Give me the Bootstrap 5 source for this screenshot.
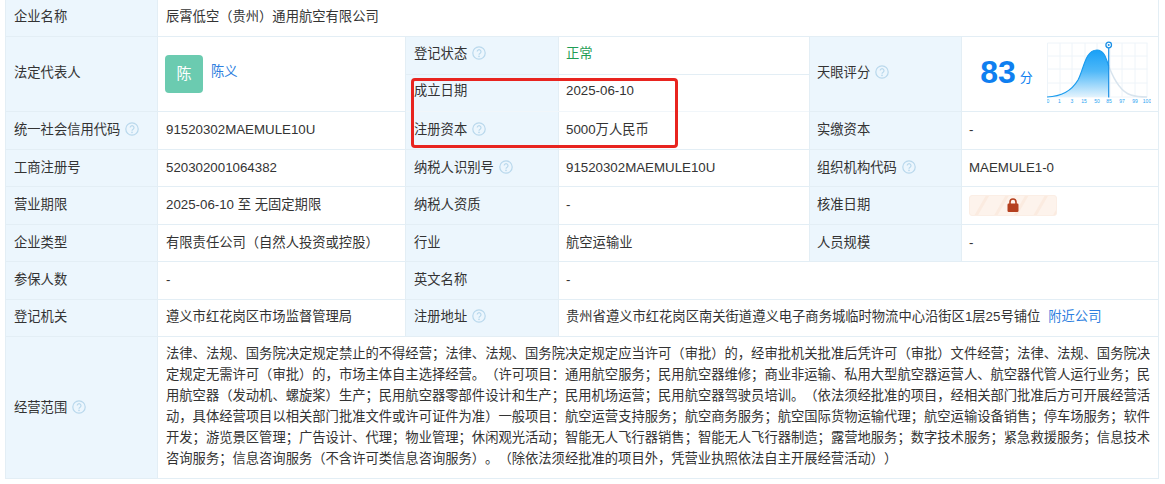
<!DOCTYPE html>
<html lang="zh">
<head>
<meta charset="utf-8">
<title>企业信息</title>
<link rel="stylesheet" href="https://cdn.jsdelivr.net/npm/bootstrap@5.3.0/dist/css/bootstrap.min.css">
<style>
body{background:#fff;color:#333;font-family:"Liberation Sans","Noto Sans CJK SC",sans-serif;font-size:13.3px;margin:0;overflow:hidden;text-spacing-trim:space-all}
.sheet-wrap{position:relative;display:flow-root;padding:0 7px 0 5px}
.info-sheet{table-layout:fixed;width:1153px;border-collapse:collapse;margin-top:-4px}
.info-sheet td{border:1px solid #e3eef5;padding:0 8px;height:37.5px;vertical-align:middle;line-height:20px;color:#333}
.info-sheet td.lbl{background:#ecf6fd}
.row-top td{height:40px}
.info-sheet td.tight{padding-left:7px}
.info-sheet td.no-bottom{border-bottom-color:#f1f6fa;padding-bottom:3px}
.info-sheet td.raised{padding-bottom:2px}
.info-sheet td.scope-cell{height:142px;line-height:21px;text-align:justify;padding:5px 8px 9px}
.help-ic{width:14px;height:14px;vertical-align:-2px;margin-left:5px}
.ok-text{color:#1f9d55}
.blue-link{color:#2f7fe0;text-decoration:none}
.avatar-tile{width:38px;height:38px;background:#6bcbb0;border-radius:4px;color:#fff;font-size:15px;margin-left:-1px}
.score-num{font-size:32px;font-weight:700;color:#0f7ff0;line-height:1}
.score-unit{font-size:13px;color:#0f7ff0;margin-left:4px}
.score-box{width:85px;padding-left:4px;padding-bottom:4px}
.score-chart{width:104px;height:68px;display:block}
.lock-pill{width:88px;height:21px;border-radius:3px;background:repeating-linear-gradient(120deg,#fdf3ec 0 13px,#fbebe0 14px 16px,#fdf3ec 17px);border:1px solid #fbeee5}
.red-frame{position:absolute;left:411px;top:78px;width:267px;height:70px;border:3px solid #e8241f;border-radius:4px;pointer-events:none}
</style>
</head>
<body>
<svg width="0" height="0" class="d-block" aria-hidden="true">
<symbol id="q-ic" viewBox="0 0 14 14"><circle cx="7" cy="7" r="6.2" fill="none" stroke="#b9d8ec" stroke-width="1.2"/><path d="M5.2 5.6a1.9 1.9 0 1 1 2.900 1.600c-.7.4-1.100.8-1.100 1.600" fill="none" stroke="#b9d8ec" stroke-width="1.200"/><circle cx="7" cy="10.400" r=".8" fill="#b9d8ec"/></symbol>
</svg>
<div class="sheet-wrap">
<table class="info-sheet">
<colgroup><col style="width:152px"><col style="width:248px"><col style="width:153px"><col style="width:251px"><col style="width:152px"><col style="width:197px"></colgroup>
<tr class="row-top"><td class="lbl">企业名称</td><td colspan="5">辰霄低空（贵州）通用航空有限公司</td></tr>
<tr>
<td class="lbl raised" rowspan="2">法定代表人</td>
<td rowspan="2"><div class="d-flex align-items-center gap-2"><div class="avatar-tile d-flex align-items-center justify-content-center">陈</div><a class="blue-link mb-1" href="#">陈义</a></div></td>
<td class="lbl raised">登记状态<svg class="help-ic"><use href="#q-ic"/></svg></td>
<td class="ok-text raised tight"><span class="ok-text">正常</span></td>
<td class="lbl raised tight" rowspan="2">天眼评分<svg class="help-ic"><use href="#q-ic"/></svg></td>
<td rowspan="2" class="p-0">
<div class="d-flex align-items-center">
<div class="score-box d-flex align-items-end justify-content-center"><span class="score-num">83</span><span class="score-unit">分</span></div>
<svg class="score-chart" viewBox="0 0 104 68">
<defs><linearGradient id="bell" x1="0" y1="0" x2="0" y2="1"><stop offset="0" stop-color="#18a0f7"/><stop offset=".45" stop-color="#4fb8f8"/><stop offset="1" stop-color="#e3f3fd"/></linearGradient></defs>
<g stroke="#eef4f9" stroke-width="1" fill="none"><path d="M.5 3h100M.5 16h100M.5 29h100M.5 43h100M.5 57h100M.5 3v54M13 3v54M25 3v54M38 3v54M50 3v54M63 3v54M75 3v54M88 3v54M100 3v54"/></g>
<path d="M61.700 26C67 40 74 52 84 55 90 57 95 57 100 57" fill="none" stroke="#d8e4ee" stroke-width="1.500"/>
<path d="M0 57C14 56.500 24 52 31 40 37 29 38 10 50 10 57 10 59 18 61.700 26V57Z" fill="url(#bell)"/>
<path d="M0 57C14 56.500 24 52 31 40 37 29 38 10 50 10 57 10 59 18 61.700 26" fill="none" stroke="#1a9bee" stroke-width="1.200"/>
<path d="M61.700 8V57.500" stroke="#1a8fe6" stroke-width="1.200"/>
<circle cx="61.700" cy="5" r="2.800" fill="#fff" stroke="#1a8fe6" stroke-width="1.300"/><circle cx="61.700" cy="5" r="1" fill="#1a8fe6"/>
<g font-family="Liberation Sans,sans-serif" font-size="5" fill="#2aa4f2" text-anchor="middle"><text x="0.800" y="63">0</text><text x="12.500" y="63">1</text><text x="25" y="63">3</text><text x="37" y="63">15</text><text x="50" y="63">50</text><text x="62" y="63">85</text><text x="75" y="63">97</text><text x="88" y="63">99</text><text x="100" y="63">100</text></g>
</svg>
</div>
</td>
</tr>
<tr>
<td class="lbl no-bottom">成立日期</td><td class="no-bottom tight">2025-06-10</td>
</tr>
<tr>
<td class="lbl">统一社会信用代码<svg class="help-ic"><use href="#q-ic"/></svg></td><td>91520302MAEMULE10U</td>
<td class="lbl">注册资本<svg class="help-ic"><use href="#q-ic"/></svg></td><td class="tight">5000万人民币</td>
<td class="lbl tight">实缴资本</td><td class="tight">-</td>
</tr>
<tr>
<td class="lbl">工商注册号</td><td>520302001064382</td>
<td class="lbl">纳税人识别号<svg class="help-ic"><use href="#q-ic"/></svg></td><td class="tight">91520302MAEMULE10U</td>
<td class="lbl tight">组织机构代码<svg class="help-ic"><use href="#q-ic"/></svg></td><td class="tight">MAEMULE1-0</td>
</tr>
<tr>
<td class="lbl">营业期限</td><td>2025-06-10 至 无固定期限</td>
<td class="lbl">纳税人资质</td><td class="tight">-</td>
<td class="lbl tight">核准日期</td>
<td class="tight"><div class="lock-pill d-flex align-items-center justify-content-center"><svg width="12" height="14" viewBox="0 0 12 14"><path d="M3 6V4a3 3 0 0 1 6 0v2" fill="none" stroke="#b5401f" stroke-width="1.600"/><rect x="0.500" y="5.500" width="11" height="8.500" rx="1.200" fill="#b5401f"/></svg></div></td>
</tr>
<tr>
<td class="lbl">企业类型</td><td>有限责任公司（自然人投资或控股）</td>
<td class="lbl">行业</td><td class="tight">航空运输业</td>
<td class="lbl tight">人员规模</td><td class="tight">-</td>
</tr>
<tr>
<td class="lbl">参保人数</td><td>-</td>
<td class="lbl">英文名称</td><td class="tight" colspan="3">-</td>
</tr>
<tr>
<td class="lbl raised">登记机关</td><td class="raised">遵义市红花岗区市场监督管理局</td>
<td class="lbl raised">注册地址<svg class="help-ic"><use href="#q-ic"/></svg></td>
<td class="raised tight" colspan="3">贵州省遵义市红花岗区南关街道遵义电子商务城临时物流中心沿街区1层25号铺位<a class="blue-link ms-2" href="#">附近公司</a></td>
</tr>
<tr>
<td class="lbl">经营范围<svg class="help-ic"><use href="#q-ic"/></svg></td>
<td class="scope-cell" colspan="5">法律、法规、国务院决定规定禁止的不得经营；法律、法规、国务院决定规定应当许可（审批）的，经审批机关批准后凭许可（审批）文件经营；法律、法规、国务院决定规定无需许可（审批）的，市场主体自主选择经营。（许可项目：通用航空服务；民用航空器维修；商业非运输、私用大型航空器运营人、航空器代管人运行业务；民用航空器（发动机、螺旋桨）生产；民用航空器零部件设计和生产；民用机场运营；民用航空器驾驶员培训。（依法须经批准的项目，经相关部门批准后方可开展经营活动，具体经营项目以相关部门批准文件或许可证件为准）一般项目：航空运营支持服务；航空商务服务；航空国际货物运输代理；航空运输设备销售；停车场服务；软件开发；游览景区管理；广告设计、代理；物业管理；休闲观光活动；智能无人飞行器销售；智能无人飞行器制造；露营地服务；数字技术服务；紧急救援服务；信息技术咨询服务；信息咨询服务（不含许可类信息咨询服务）。（除依法须经批准的项目外，凭营业执照依法自主开展经营活动））</td>
</tr>
</table>
<div class="red-frame"></div>
</div>
<script src="https://cdn.jsdelivr.net/npm/bootstrap@5.3.0/dist/js/bootstrap.bundle.min.js"></script>
</body>
</html>
